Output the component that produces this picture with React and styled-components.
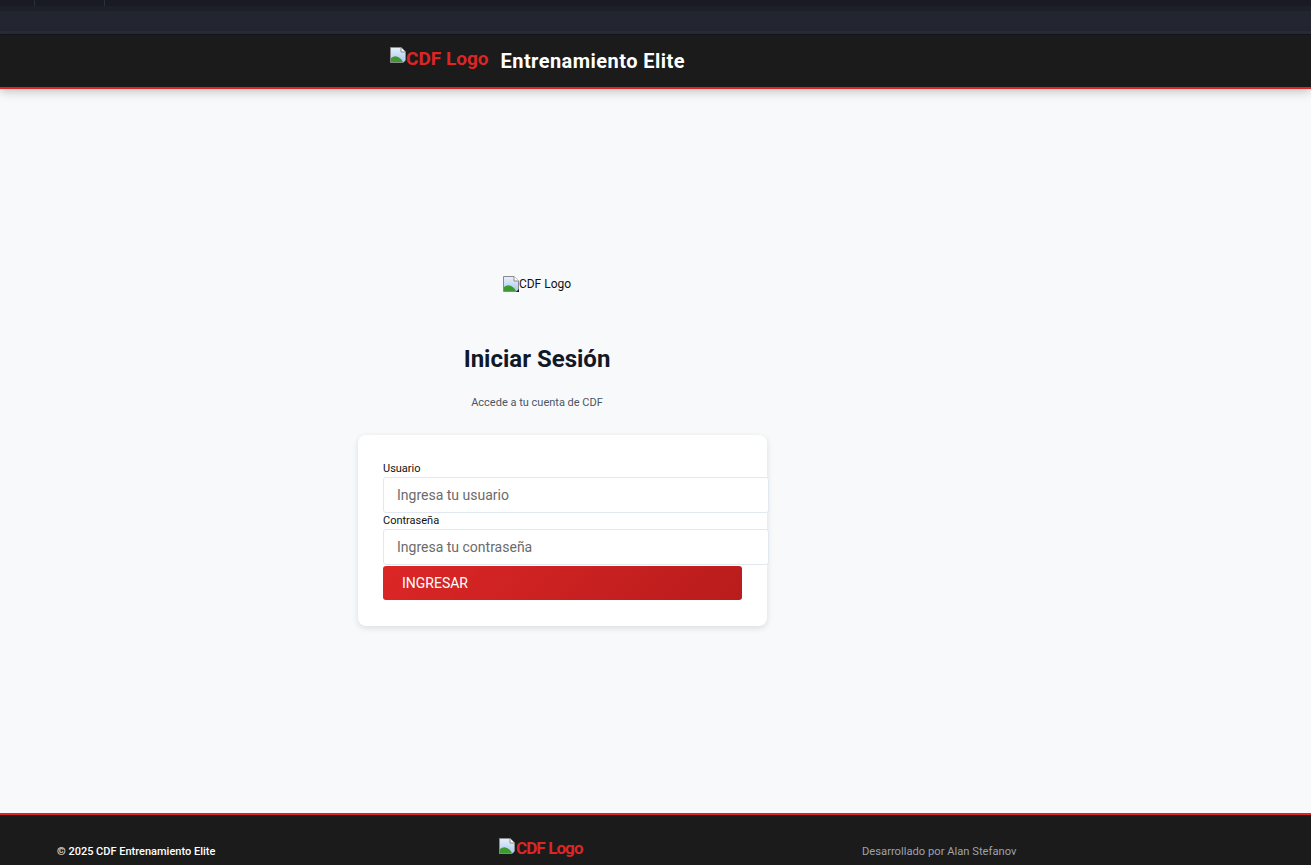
import React from "react";
import styled, { createGlobalStyle } from "styled-components";

const Global = createGlobalStyle`
  html, body { margin: 0; padding: 0; }
  body {
    font-family: Roboto, "Liberation Sans", Arial, sans-serif;
    background: #f8f9fb;
  }
  * { box-sizing: border-box; }
`;

const Page = styled.div`
  display: flex;
  flex-direction: column;
`;

const Chrome = styled.div`
  height: 35px;
  background: #232630;
  display: flex;
  flex-direction: column;
  border-bottom: 1px solid #15161c;
`;

const ChromeTabs = styled.div`
  height: 6px;
  background: #191a24;
  display: flex;
`;

const ChromeTab = styled.div`
  width: ${(p) => p.$w}px;
  border-right: 1px solid #2c2e38;
`;

const ChromeStrip = styled.div`
  height: 5px;
  background: #1d1f29;
`;

const ChromeBody = styled.div`
  flex: 1;
  border-bottom: 3px solid #2b2d36;
`;

const Header = styled.header`
  height: 54px;
  flex: none;
  background: #1b1b1b;
  border-bottom: 2px solid #dc2626;
  box-shadow: 0 2px 10px rgba(0, 0, 0, 0.25);
  display: flex;
  align-items: center;
  padding-left: 390px;
  gap: 12px;
  position: relative;
  z-index: 1;
`;

const LogoAlt = styled.span`
  display: inline-flex;
  align-items: flex-start;
  color: #dc2626;
  font-weight: 700;
  font-size: ${(p) => p.$size || 19}px;
  letter-spacing: ${(p) => p.$ls || 0}px;
  line-height: 1;
  margin-top: ${(p) => p.$shift || 0}px;
  svg { flex: none; margin-top: -2px; margin-right: ${(p) => (p.$ls ? 1 : 0)}px; }
`;

const Brand = styled.h1`
  margin: 0;
  color: #ffffff;
  font-size: 20px;
  font-weight: 700;
  letter-spacing: 0.45px;
`;

const Main = styled.main`
  flex: none;
  height: 724px;
  display: flex;
  align-items: center;
  padding-left: 358px;
`;

const Column = styled.div`
  width: 358px;
  display: flex;
  flex-direction: column;
  align-items: center;
`;

const LoginLogo = styled.span`
  display: inline-flex;
  align-items: center;
  font-size: 12px;
  color: #111;
`;

const Title = styled.h2`
  margin: 53px 0 0;
  font-size: 24px;
  font-weight: 700;
  color: #111827;
`;

const Subtitle = styled.p`
  margin: 23px 0 0;
  font-size: 11px;
  color: #4b5563;
`;

const Card = styled.form`
  align-self: flex-start;
  margin-top: 26px;
  width: 409px;
  background: #ffffff;
  border-radius: 8px;
  box-shadow: 0 2px 6px rgba(0, 0, 0, 0.12);
  padding: 27px 25px 26px;
  display: flex;
  flex-direction: column;
`;

const Label = styled.label`
  font-size: 11px;
  color: #111;
  font-weight: 400;
  line-height: 13px;
  margin-bottom: 2px;
`;

const Input = styled.input`
  width: 386px;
  height: 36px;
  padding: 0 13px;
  border: 1px solid #e2e8f0;
  border-radius: 3px;
  font-family: inherit;
  font-size: 14px;
  color: #111;
  background: #fff;
  outline: none;
  margin-bottom: 1px;
  &::placeholder { color: #6b6b6b; }
`;

const Button = styled.button`
  height: 34px;
  width: 359px;
  border: none;
  border-radius: 3px;
  background: linear-gradient(135deg, #dc2626 0%, #b91c1c 100%);
  color: #fff;
  font-family: inherit;
  font-size: 14px;
  text-align: left;
  padding: 0 19px;
  cursor: pointer;
`;

const Footer = styled.footer`
  background: #1b1b1b;
  border-top: 2px solid #dc2626;
  height: 60px;
  display: grid;
  grid-template-columns: 499px 363px 1fr;
  align-items: start;
  padding-top: 25px;
`;

const Copy = styled.span`
  padding-left: 57px;
  padding-top: 5px;
  color: #ffffff;
  font-size: 11px;
  font-weight: 500;
`;

const Credit = styled.span`
  padding-top: 5px;
  color: #9ca3af;
  font-size: 11.2px;
`;

const BrokenImg = () => (
  <svg width="16" height="16" viewBox="0 0 16 16">
    <defs>
      <linearGradient id="sky" x1="0" y1="0" x2="0" y2="1">
        <stop offset="0" stopColor="#e8f1fb" />
        <stop offset="1" stopColor="#a8c8ec" />
      </linearGradient>
    </defs>
    <path d="M0.5 0.5 H11 L15.5 5 V15.5 H0.5 Z" fill="url(#sky)" stroke="#8a8a8a" />
    <path d="M11 0.5 V5 H15.5" fill="#fff" stroke="#8a8a8a" />
    <path d="M1 15 L1 11 Q6 7 11 12 L13 15 Z" fill="#3d9a2f" />
    <path d="M13 16 L16 13 V16 Z" fill="#1b1b1b" />
  </svg>
);

export default function App() {
  return (
    <>
      <Global />
      <Page>
        <Chrome>
          <ChromeTabs>
            <ChromeTab $w={35} />
            <ChromeTab $w={70} />
          </ChromeTabs>
          <ChromeStrip />
          <ChromeBody />
        </Chrome>
        <Header>
          <LogoAlt $shift={-6}>
            <BrokenImg />
            CDF Logo
          </LogoAlt>
          <Brand>Entrenamiento Elite</Brand>
        </Header>
        <Main>
          <Column>
            <LoginLogo>
              <BrokenImg />
              CDF Logo
            </LoginLogo>
            <Title>Iniciar Sesión</Title>
            <Subtitle>Accede a tu cuenta de CDF</Subtitle>
            <Card onSubmit={(e) => e.preventDefault()}>
              <Label htmlFor="u">Usuario</Label>
              <Input id="u" placeholder="Ingresa tu usuario" />
              <Label htmlFor="p">Contraseña</Label>
              <Input id="p" type="password" placeholder="Ingresa tu contraseña" />
              <Button type="submit">INGRESAR</Button>
            </Card>
          </Column>
        </Main>
        <Footer>
          <Copy>© 2025 CDF Entrenamiento Elite</Copy>
          <LogoAlt $size={17} $ls={-0.9}>
            <BrokenImg />
            CDF Logo
          </LogoAlt>
          <Credit>Desarrollado por Alan Stefanov</Credit>
        </Footer>
      </Page>
    </>
  );
}
